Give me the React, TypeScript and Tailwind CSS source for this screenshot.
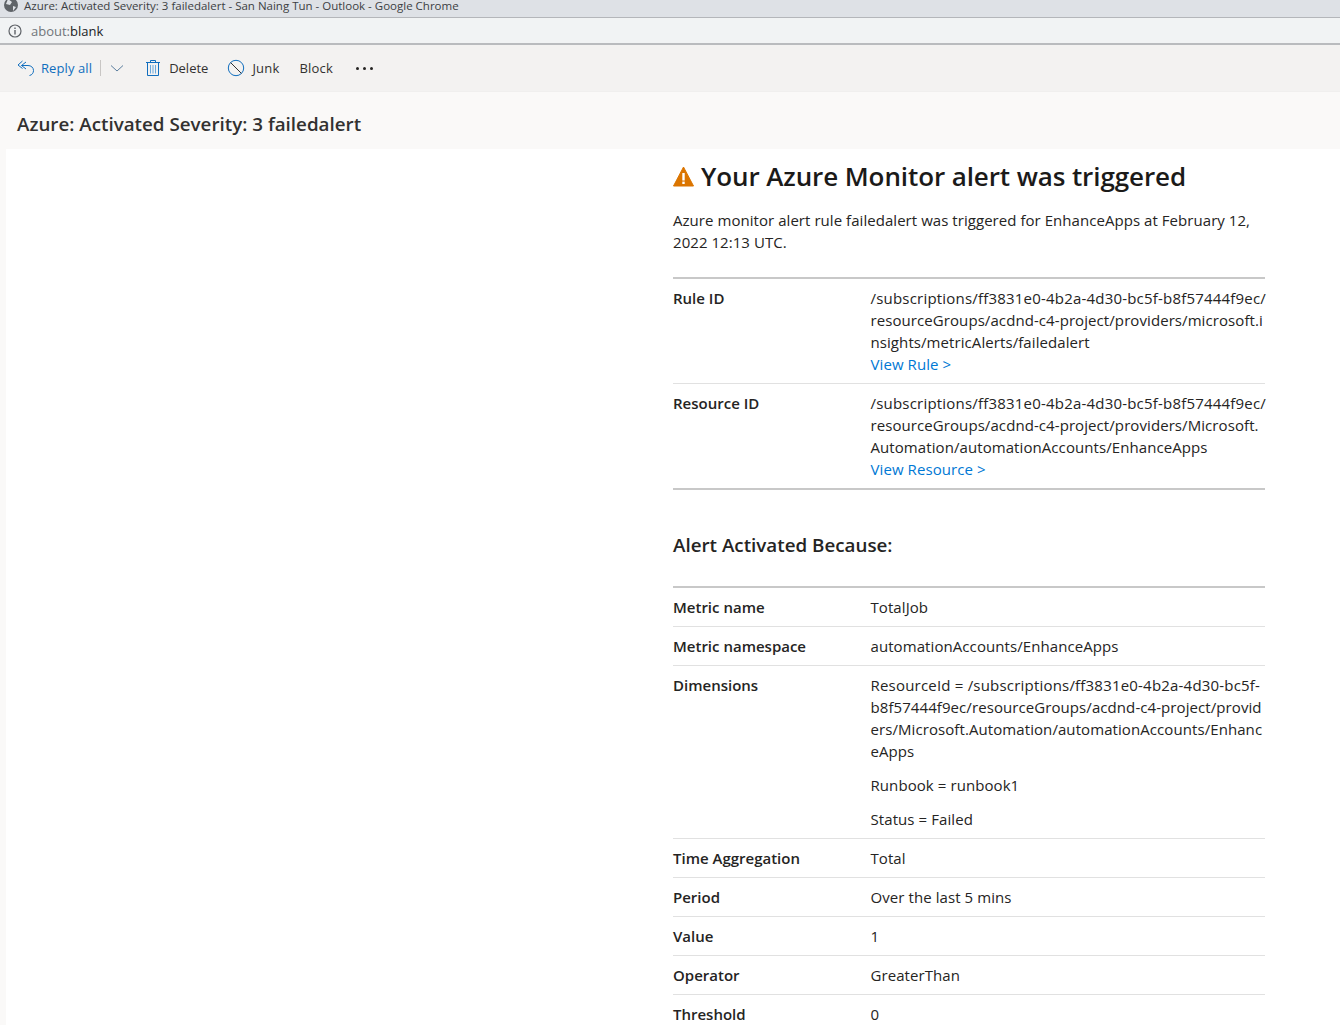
import type { ReactNode } from 'react';

const font = "font-['Open_Sans',sans-serif]";

function WarnIcon() {
  return (
    <svg width="21" height="21" viewBox="0 0 21 21" className="shrink-0">
      <path d="M10.5 1 L20.5 20 H0.5 Z" fill="#db7500" stroke="#db7500" strokeLinejoin="round" strokeWidth="1" />
      <rect x="9.3" y="7" width="2.4" height="7.5" fill="#fff" />
      <rect x="9.3" y="15.6" width="2.4" height="2.4" fill="#fff" />
    </svg>
  );
}

function Row({ label, children, last }: { label: string; children: ReactNode; last?: boolean }) {
  return (
    <div className={`flex py-2 ${last ? '' : 'border-b border-[#e1e1e1]'}`}>
      <div className="w-[197.5px] shrink-0 font-semibold text-[#252423]">{label}</div>
      <div className="flex-1 whitespace-nowrap text-[#252423] tracking-[0.08px]">{children}</div>
    </div>
  );
}

function Toolbar() {
  return (
    <div className="h-[46px] bg-[#f3f2f1] flex items-center pl-[17px] text-[13px] text-[#323130]">
      <svg width="18" height="18" viewBox="0 0 18 18" fill="none" stroke="#106ebe" strokeWidth="1">
        <path d="M5.5 2 L1 6 L5.5 9.5" />
        <path d="M9 3 L4.5 6.5 L9 10" />
        <path d="M4.5 6.5 H11 C14 6.5 16.5 8.5 16.5 11.5 C16.5 14 15 16 12.5 16.5" />
      </svg>
      <span className="ml-[6px] text-[#106ebe] tracking-[0.1px] leading-[20px]">Reply all</span>
      <div className="ml-[8px] w-px h-4 bg-[#c8c6c4]" />
      <svg className="ml-[9px]" width="14" height="14" viewBox="0 0 14 14" fill="none" stroke="#5c7f9f" strokeWidth="1">
        <path d="M1 4.5 L7 10 L13 4.5" />
      </svg>
      <svg className="ml-[21px]" width="16" height="18" viewBox="0 0 16 18" fill="none" stroke="#106ebe" strokeWidth="1">
        <path d="M1 3.5 H15 M5.5 3.5 V1.5 H10.5 V3.5" />
        <path d="M2.5 3.5 V16.5 H13.5 V3.5" />
        <path d="M5.5 6 V14.5 M8 6 V14.5 M10.5 6 V14.5" stroke="#6ba9dc" />
      </svg>
      <span className="ml-[8px] mt-[1px]">Delete</span>
      <svg className="ml-[19px]" width="18" height="18" viewBox="0 0 18 18" fill="none" stroke="#106ebe" strokeWidth="1">
        <circle cx="9" cy="9" r="7.7" />
        <path d="M3.6 3.6 L14.4 14.4" stroke="#323130" />
      </svg>
      <span className="ml-[7px] mt-[1px] tracking-[0.2px]">Junk</span>
      <span className="ml-[20px] mt-[1px] tracking-[0.2px]">Block</span>
      <div className="ml-[23px] flex gap-[4px]">
        <div className="size-[3px] rounded-full bg-[#252423]" />
        <div className="size-[3px] rounded-full bg-[#252423]" />
        <div className="size-[3px] rounded-full bg-[#252423]" />
      </div>
    </div>
  );
}

export default function App() {
  return (
    <div className={`h-[1025px] overflow-hidden bg-[#faf9f8] ${font}`}>
      <div className="h-[18px] bg-[#dee1e6] border-b border-[#b4b6ba] flex items-start pl-[4px] text-[11.5px] leading-[12px] text-[#3c4043]">
        <svg width="14" height="14" viewBox="0 0 14 14" className="-mt-[2px]">
          <circle cx="7" cy="7" r="7" fill="#5f6368" />
          <path d="M4 1 L8 4 L6 7 L2 6 Z M9 8 L12 9 L9 13 Z" fill="#dee1e6" />
        </svg>
        <span className="ml-[6px] whitespace-nowrap">Azure: Activated Severity: 3 failedalert - San Naing Tun - Outlook - Google Chrome</span>
      </div>
      <div className="h-[27px] bg-[#f1f3f4] border-b-2 border-[#b9bbbe] flex items-center pl-[8px] text-[13px]">
        <svg width="14" height="14" viewBox="0 0 14 14" fill="none" stroke="#5f6368">
          <circle cx="7" cy="7" r="6" strokeWidth="1.2" />
          <path d="M7 6 V10.5 M7 3.5 V5" strokeWidth="1.4" />
        </svg>
        <span className="ml-[9px] mt-[2px] text-[#70757a]">about:</span>
        <span className="mt-[2px] text-[#202124]">blank</span>
      </div>
      <Toolbar />
      <div className="h-[58px] pl-[17px] pt-[17px] text-[18.8px] leading-[30px] font-semibold text-[#323130] border-t border-[#f0efee]">
        Azure: Activated Severity: 3 failedalert
      </div>
      <div className="ml-[6px] bg-white h-[876px] pl-[667px] text-[15px] leading-[22px]">
        <div className="w-[592px]">
          <div className="flex items-center gap-[7px] h-[54px] text-[26px] font-semibold text-[#1b1a19] tracking-[-0.1px]">
            <WarnIcon />
            <span className="whitespace-nowrap">Your Azure Monitor alert was triggered</span>
          </div>
          <p className="mt-[6px] text-[#252423] tracking-[0.05px]">
            Azure monitor alert rule failedalert was triggered for EnhanceApps at February 12,
            <br />
            2022 12:13 UTC.
          </p>
          <div className="mt-[24px] border-y-2 border-[#c8c8c8]">
            <Row label="Rule ID">
              <span className="tracking-[0.2px]">/subscriptions/ff3831e0-4b2a-4d30-bc5f-b8f57444f9ec/</span><br />
              resourceGroups/acdnd-c4-project/providers/microsoft.i<br />
              nsights/metricAlerts/failedalert<br />
              <a className="text-[#0078d4]">View Rule &gt;</a>
            </Row>
            <Row label="Resource ID" last>
              <span className="tracking-[0.2px]">/subscriptions/ff3831e0-4b2a-4d30-bc5f-b8f57444f9ec/</span><br />
              resourceGroups/acdnd-c4-project/providers/Microsoft.<br />
              Automation/automationAccounts/EnhanceApps<br />
              <a className="text-[#0078d4]">View Resource &gt;</a>
            </Row>
          </div>
          <h2 className="mt-[41px] text-[18.8px] leading-[28px] font-semibold text-[#252423]">Alert Activated Because:</h2>
          <div className="mt-[27px] border-t-2 border-[#c8c8c8]">
            <Row label="Metric name">TotalJob</Row>
            <Row label="Metric namespace">automationAccounts/EnhanceApps</Row>
            <Row label="Dimensions">
              <p>
                <span className="tracking-[0.2px]">ResourceId = /subscriptions/ff3831e0-4b2a-4d30-bc5f-</span><br />
                b8f57444f9ec/resourceGroups/acdnd-c4-project/provid<br />
                ers/Microsoft.Automation/automationAccounts/Enhanc<br />
                eApps
              </p>
              <p className="mt-[12px]">Runbook = runbook1</p>
              <p className="mt-[12px]">Status = Failed</p>
            </Row>
            <Row label="Time Aggregation">Total</Row>
            <Row label="Period">Over the last 5 mins</Row>
            <Row label="Value">1</Row>
            <Row label="Operator">GreaterThan</Row>
            <Row label="Threshold">0</Row>
          </div>
        </div>
      </div>
    </div>
  );
}
